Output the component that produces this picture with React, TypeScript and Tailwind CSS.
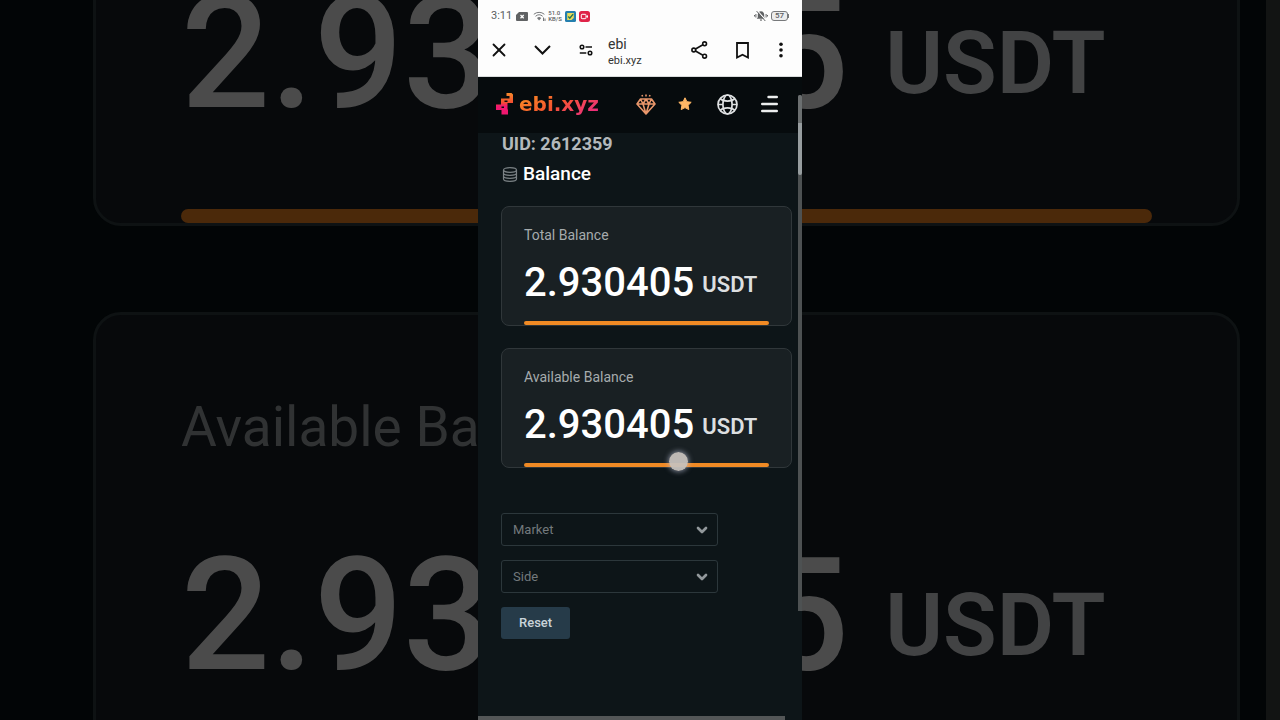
import React from "react";
import { ChevronDown, X } from "lucide-react";

type Balance = { label: string; amount: string; unit: string };

const balances: Balance[] = [
  { label: "Total Balance", amount: "2.930405", unit: "USDT" },
  { label: "Available Balance", amount: "2.930405", unit: "USDT" },
];

function BackdropCard({ label, amount, unit }: Balance) {
  return (
    <div className="flex h-[476px] shrink-0 flex-col rounded-[28px] border-3 border-[#0e1213] bg-[#07090b] px-[85px] pt-[85px]">
      <div className="text-[55px] leading-[54px] whitespace-nowrap text-[#303233]">{label}</div>
      <div className="mt-[82px] flex items-end gap-9 font-medium whitespace-nowrap">
        <span className="text-[157px] leading-[158px] text-[#4b4b4b]">{amount}</span>
        <span className="text-[88px] leading-[138px] font-semibold text-[#424344]">{unit}</span>
      </div>
      <div className="mt-auto h-[14px] rounded-full bg-[#4b290a]" />
    </div>
  );
}

function BalanceCard({ label, amount, unit }: Balance) {
  return (
    <section className="rounded-lg border border-[#30373a] bg-[#192023] px-[22px] pt-[18px]">
      <h2 className="text-sm leading-5 text-[#a6abad]">{label}</h2>
      <p className="mt-[18px] flex items-end gap-2 font-medium whitespace-nowrap">
        <span className="text-[40px] leading-10 text-white">{amount}</span>
        <span className="text-[22px] leading-9 font-semibold text-[#dcdfe0]">{unit}</span>
      </p>
      <div className="mt-[18px] h-1 rounded-full bg-[#f08a24]" />
    </section>
  );
}

function FilterSelect({ id, label }: { id: string; label: string }) {
  return (
    <div className="grid w-[217px] items-center">
      <select
        id={id}
        aria-label={label}
        defaultValue=""
        className="col-start-1 row-start-1 h-[33px] w-full appearance-none rounded-[3px] border border-[#2c373b] bg-transparent pr-8 pl-[11px] text-[13px] text-[#73797c] outline-none"
      >
        <option value="">{label}</option>
      </select>
      <ChevronDown className="pointer-events-none col-start-1 row-start-1 mr-2 size-4 justify-self-end text-[#92989b]" strokeWidth={4} />
    </div>
  );
}

function StatusBar() {
  return (
    <div className="flex h-8 items-center justify-between px-[13px] text-[#5b5d5f]">
      <div className="flex items-center">
        <span className="text-[11px] leading-4">3:11</span>
        <svg className="ml-1 h-[9px] w-3" viewBox="0 0 12 9">
          <path d="M3 0h8a1 1 0 0 1 1 1v7a1 1 0 0 1-1 1H1a1 1 0 0 1-1-1V3z" fill="#606264" />
          <path d="m4.500 3 3.200 3.200M7.700 3 4.500 6.200" stroke="#fff" strokeWidth="1.300" />
        </svg>
        <svg className="ml-[5px] h-3 w-[13px]" viewBox="0 0 13 12" fill="none" stroke="#77797b">
          <path d="M.8 4.300a8.200 8.200 0 0 1 10.600 0M2.500 6.300a5.500 5.500 0 0 1 7.200 0" strokeWidth="1" />
          <path d="M4 8a3.200 3.200 0 0 1 4.200 0L6.100 10.400z" fill="#77797b" stroke="none" />
          <path d="M10.500 7.500v3.500M12 8.500v2.500" strokeWidth="1" />
        </svg>
        <span className="ml-0.5 flex flex-col text-[6px] leading-[6px] font-medium">
          <span>51.0</span>
          <span>KB/S</span>
        </span>
        <svg className="ml-[3px] size-[11px]" viewBox="0 0 11 11">
          <rect width="11" height="11" rx="1.500" fill="#247fae" />
          <path d="M2.200 2h6.600v5L6.500 9H2.200z" fill="#e7dc5a" />
          <path d="m3.300 5.600 1.500 1.600 3.300-4.100" fill="none" stroke="#1f7358" strokeWidth="1.400" />
        </svg>
        <svg className="ml-[3px] size-[11px]" viewBox="0 0 11 11">
          <rect width="11" height="11" rx="2.500" fill="#df2348" />
          <rect x="2.300" y="3.300" width="4.700" height="4.400" rx=".8" fill="none" stroke="#fff" />
          <path d="M7 5.500 9 4v3z" fill="#fff" />
        </svg>
      </div>
      <div className="flex items-center gap-[3px]">
        <svg className="h-3 w-[14px]" viewBox="0 0 14 12">
          <path d="M7 1.300c-2 0-3.200 1.500-3.200 3.400v2.500L2.700 8.700h8.600l-1.100-1.500V4.700C10.200 2.800 9 1.300 7 1.300zM5.800 9.500a1.200 1.200 0 0 0 2.400 0z" fill="#606264" />
          <path d="M1.900 4v3.500M.5 5v1.500M12.100 4v3.500M13.500 5v1.500" stroke="#606264" />
          <path d="M3.500.8 12 10.400" stroke="#fff" strokeWidth="1.100" />
          <path d="M2.600 1.100 11.300 11" stroke="#606264" />
        </svg>
        <span className="flex items-center">
          <span className="flex h-[10px] w-[17px] items-center justify-center rounded-[3px] border border-[#77797b] bg-[#ececec] text-[8px] leading-none font-medium">57</span>
          <span className="h-1 w-px bg-[#77797b]" />
        </span>
      </div>
    </div>
  );
}

function BrowserBar() {
  return (
    <div className="flex h-[45px] items-start border-b border-[#d9dcdc] text-[#111]">
      <button aria-label="Close" className="ml-[11px] flex h-9 w-5 items-center justify-center">
        <X className="size-[22px] shrink-0" strokeWidth={2} />
      </button>
      <button aria-label="Minimize" className="ml-[23px] flex h-9 w-5 items-center justify-center">
        <svg className="h-[10px] w-[17px] shrink-0" viewBox="0 0 17 10" fill="none" stroke="currentColor" strokeWidth="2">
          <path d="m1 1 7.500 7.500L16 1" />
        </svg>
      </button>
      <button aria-label="Site settings" className="ml-6 flex h-9 w-5 items-center justify-center">
        <svg className="h-3 w-[14px] shrink-0" viewBox="0 0 14 12" fill="none" stroke="currentColor" strokeWidth="1.500">
          <circle cx="3" cy="3" r="1.800" />
          <path d="M6.500 3H13M.8 9h6.500" />
          <circle cx="11" cy="9" r="1.800" />
        </svg>
      </button>
      <div className="ml-3 flex flex-col pt-1">
        <span className="text-sm leading-4 text-[#333]">ebi</span>
        <span className="text-[11px] leading-[18px] text-[#333]">ebi.xyz</span>
      </div>
      <div className="ml-auto flex h-9 items-center pr-[19px]">
        <button aria-label="Share">
          <svg className="h-[18px] w-[17px]" viewBox="0 0 17 18" fill="none" stroke="currentColor" strokeWidth="1.600">
            <circle cx="2.800" cy="9" r="1.900" />
            <circle cx="13.600" cy="2.800" r="1.900" />
            <circle cx="13.600" cy="15.200" r="1.900" />
            <path d="m4.500 8 7.400-4.200M4.500 10l7.400 4.200" />
          </svg>
        </button>
        <button aria-label="Bookmark" className="ml-7">
          <svg className="h-[17px] w-[13px]" viewBox="0 0 13 17" fill="none" stroke="currentColor" strokeWidth="1.800">
            <path d="M1 1h11v14.500l-5.500-2.800L1 15.500z" />
          </svg>
        </button>
        <button aria-label="More" className="ml-[30px]">
          <svg className="h-4 w-1" viewBox="0 0 4 16" fill="currentColor">
            <circle cx="2" cy="2.300" r="1.800" />
            <circle cx="2" cy="8" r="1.800" />
            <circle cx="2" cy="13.700" r="1.800" />
          </svg>
        </button>
      </div>
    </div>
  );
}

function SiteHeader() {
  return (
    <header className="bg-[#060b0d] pb-0.5">
      <div className="flex h-[54px] items-center pr-6 pl-[18px]">
        <a href="#home" className="flex items-center gap-[6px]">
          <svg className="h-[22px] w-[17px]" viewBox="0 0 17 22">
            <defs>
              <linearGradient id="mark" x1="0" y1="0" x2="0" y2="22" gradientUnits="userSpaceOnUse">
                <stop offset="0" stopColor="#f58a2b" />
                <stop offset=".42" stopColor="#f4512f" />
                <stop offset=".6" stopColor="#f0186f" />
              </linearGradient>
            </defs>
            <path
              d="M10.500 0H15.500L17 1.500V10H11.500V16.500H12V21.500H5.500V17H0V11.500H5V5.500H13.500V3H10.500zM8.500 7.500v1.500h3v-1.500zM5.500 13.500v1.500h2.500v-1.500z"
              fill="url(#mark)"
              fillRule="evenodd"
            />
          </svg>
          <span className="bg-linear-150 from-[#f7941d] via-[#f4522f] to-[#ea1a86] bg-clip-text font-['DejaVu_Sans'] text-[20px] leading-6 font-bold text-transparent">ebi.xyz</span>
        </a>
        <nav className="ml-auto flex items-center">
          <button aria-label="Rewards">
            <svg className="h-[21px] w-5" viewBox="0 0 20 21" fill="none" stroke="#e9976b" strokeWidth="1.600" strokeLinejoin="round">
              <path d="M4.500 5h11L19 10l-9 10L1 10zM1 10h18M4.500 5 7 10l3-5 3 5 2.500-5M7 10l3 10 3-10" />
              <path d="M10 .5v2M6 1l.6 1.500M14 1l-.6 1.500" />
            </svg>
          </button>
          <button aria-label="Favorites" className="ml-[22px]">
            <svg className="size-[14px]" viewBox="0 0 14 14" fill="#ffb765" stroke="#ffb765" strokeLinejoin="round">
              <path d="m7 .8 1.900 3.900 4.300.6-3.100 3 .7 4.300L7 10.600l-3.800 2 .7-4.300-3.100-3 4.300-.6z" />
            </svg>
          </button>
          <button aria-label="Language" className="ml-[25px]">
            <svg className="size-[21px]" viewBox="0 0 21 21" fill="none" stroke="#dfe2e3" strokeWidth="1.700">
              <circle cx="10.500" cy="10.500" r="9.500" />
              <ellipse cx="10.500" cy="10.500" rx="4.600" ry="9.500" />
              <path d="M3.200 4.700c3.200 3.200 11.400 3.200 14.600 0M3.200 16.300c3.200-3.200 11.400-3.200 14.600 0M1 10.500h5M15 10.500h5" />
            </svg>
          </button>
          <button aria-label="Menu" className="ml-[23px]">
            <svg className="h-[18px] w-[17px]" viewBox="0 0 17 18" stroke="#eceeee" strokeWidth="2.400" strokeLinecap="round">
              <path d="M7.500 2h8.300M1.200 9h14.600M1.200 16h14.600" />
            </svg>
          </button>
        </nav>
      </div>
    </header>
  );
}

export default function App() {
  return (
    <div className="relative flex min-h-screen justify-center overflow-hidden bg-[#020506] font-['Roboto',sans-serif]">
      <div aria-hidden="true" className="absolute inset-0 flex overflow-hidden">
        <div className="-mt-[250px] flex min-w-0 flex-1 flex-col gap-[86px] pr-[26px] pl-[93px]">
          {balances.map((b) => (
            <BackdropCard key={b.label} {...b} />
          ))}
        </div>
        <div className="w-[14px] bg-[#121413]" />
      </div>

      <main className="relative flex w-[324px] flex-col bg-[#0d1518]">
        <div className="bg-[#fdfdfd]">
          <StatusBar />
          <BrowserBar />
        </div>
        <SiteHeader />
        <div className="flex flex-col pr-[10px] pl-[23px]">
          <div className="flex flex-col gap-2 pt-px pl-px">
            <div className="text-lg leading-5 font-bold text-[#b4b9bc]">UID: 2612359</div>
            <h1 className="flex items-center gap-[5px] text-[19px] leading-6 font-medium text-white">
              <svg className="h-[15px] w-4" viewBox="0 0 16 15" fill="none" stroke="#7b8285" strokeWidth="1.200">
                <ellipse cx="8" cy="3" rx="6.500" ry="2.300" />
                <path d="M1.500 3v9c0 1.300 2.900 2.300 6.500 2.300s6.500-1 6.500-2.300V3M1.500 6c0 1.300 2.900 2.300 6.500 2.300s6.500-1 6.500-2.300M1.500 9c0 1.300 2.900 2.300 6.500 2.300s6.500-1 6.500-2.300" />
              </svg>
              Balance
            </h1>
          </div>
          <div className="mt-5 flex flex-col gap-[22px]">
            {balances.map((b) => (
              <BalanceCard key={b.label} {...b} />
            ))}
          </div>
          <form className="mt-[45px] flex flex-col items-start gap-[14px]">
            <FilterSelect id="market" label="Market" />
            <FilterSelect id="side" label="Side" />
            <button type="reset" className="h-8 rounded-[3px] bg-[#263b49] px-[18px] text-[13px] font-medium text-[#c9d3da]">
              Reset
            </button>
          </form>
        </div>

        <div className="absolute top-[95px] right-0 h-[516px] w-1 overflow-hidden rounded-t bg-[#4d5152]">
          <div className="h-7 bg-[#6b6f70]" />
          <div className="h-[52px] rounded-b bg-[#979d9f]" />
        </div>
        <div className="absolute bottom-0 left-0 h-1 w-[307px] bg-[#535657]" />
        <div className="absolute top-[452px] left-[191px] size-[19px] rounded-full bg-[#c6c1bd]/95 shadow-[0_0_5px_1px_rgba(190,195,220,0.6)]" />
      </main>
    </div>
  );
}
